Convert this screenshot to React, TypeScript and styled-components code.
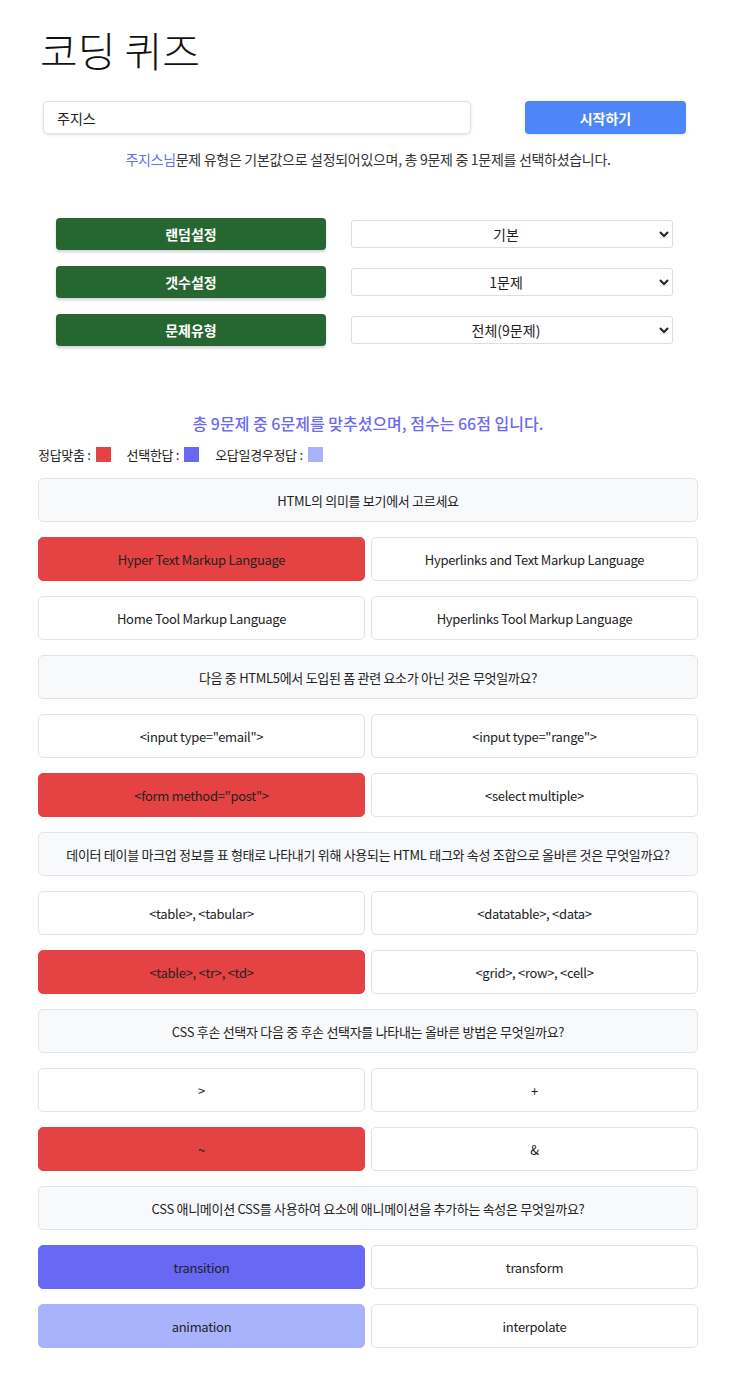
import React from 'react'
import styled, { createGlobalStyle } from 'styled-components'

const GlobalStyle = createGlobalStyle`
  body {
    margin: 0;
    background: #fff;
    font-family: "Noto Sans CJK KR", "Noto Sans", sans-serif;
    color: #222;
  }
`

type Mark = 'correct' | 'picked' | 'answer' | undefined

interface iQuiz {
    question: string
    options: string[]
    marks: Mark[]
}

const quizzes: iQuiz[] = [
    {
        question: 'HTML의 의미를 보기에서 고르세요',
        options: ['Hyper Text Markup Language', 'Hyperlinks and Text Markup Language', 'Home Tool Markup Language', 'Hyperlinks Tool Markup Language'],
        marks: ['correct', undefined, undefined, undefined],
    },
    {
        question: '다음 중 HTML5에서 도입된 폼 관련 요소가 아닌 것은 무엇일까요?',
        options: ['<input type="email">', '<input type="range">', '<form method="post">', '<select multiple>'],
        marks: [undefined, undefined, 'correct', undefined],
    },
    {
        question: '데이터 테이블 마크업 정보를 표 형태로 나타내기 위해 사용되는 HTML 태그와 속성 조합으로 올바른 것은 무엇일까요?',
        options: ['<table>, <tabular>', '<datatable>, <data>', '<table>, <tr>, <td>', '<grid>, <row>, <cell>'],
        marks: [undefined, undefined, 'correct', undefined],
    },
    {
        question: 'CSS 후손 선택자 다음 중 후손 선택자를 나타내는 올바른 방법은 무엇일까요?',
        options: ['>', '+', '~', '&'],
        marks: [undefined, undefined, 'correct', undefined],
    },
    {
        question: 'CSS 애니메이션 CSS를 사용하여 요소에 애니메이션을 추가하는 속성은 무엇일까요?',
        options: ['transition', 'transform', 'animation', 'interpolate'],
        marks: ['picked', undefined, 'answer', undefined],
    },
]

const markColor = (m: Mark) =>
    m === 'correct' ? '#e54343' : m === 'picked' ? '#6868f4' : m === 'answer' ? '#a9b3fc' : '#fff'

const settings = [
    { label: '랜덤설정', value: '기본' },
    { label: '갯수설정', value: '1문제' },
    { label: '문제유형', value: '전체(9문제)' },
]

const App: React.FC = () => {
    return (
        <Page>
            <GlobalStyle />
            <Title>코딩 퀴즈</Title>
            <StartRow>
                <NameInput defaultValue="주지스" />
                <StartButton>시작하기</StartButton>
            </StartRow>
            <Info>
                <Who>주지스님</Who>문제 유형은 기본값으로 설정되어있으며, 총 9문제 중 1문제를 선택하셨습니다.
            </Info>

            <Settings>
                {settings.map((s) => (
                    <SettingRow key={s.label}>
                        <SettingLabel>{s.label}</SettingLabel>
                        <Select defaultValue={s.value}>
                            <option>{s.value}</option>
                        </Select>
                    </SettingRow>
                ))}
            </Settings>

            <Score>총 9문제 중 6문제를 맞추셨으며, 점수는 66점 입니다.</Score>

            <Legend>
                <LegendItem>정답맞춤 : <Swatch bg="#e54343" /></LegendItem>
                <LegendItem>선택한답 : <Swatch bg="#6868f4" /></LegendItem>
                <LegendItem>오답일경우정답 : <Swatch bg="#a9b3fc" /></LegendItem>
            </Legend>

            <QuizList>
                {quizzes.map((q) => (
                    <QuizBlock key={q.question}>
                        <Question>{q.question}</Question>
                        <Options>
                            {q.options.map((o, i) => (
                                <Option key={o} bg={markColor(q.marks[i])} filled={!!q.marks[i]}>{o}</Option>
                            ))}
                        </Options>
                    </QuizBlock>
                ))}
            </QuizList>
        </Page>
    )
}

export default App

const Page = styled.div`
padding: 0 34px 40px 38px;
`

const Title = styled.h1`
margin: 0;
padding: 19px 0 0 2px;
font-size: 41px;
font-weight: 300;
line-height: 60px;
color: #111;
`

const StartRow = styled.div`
display: flex;
align-items: center;
margin-top: 22px;
padding-left: 5px;
`

const NameInput = styled.input`
width: 428px;
height: 33px;
box-sizing: border-box;
border: 1px solid #e3e3e3;
border-radius: 5px;
box-shadow: 0 1px 3px rgba(0, 0, 0, 0.12);
padding: 0 13px;
font-family: inherit;
font-size: 14px;
color: #222;
outline: none;
`

const StartButton = styled.button`
margin-left: 54px;
width: 161px;
height: 33px;
border: none;
border-radius: 4px;
background: #4d86f8;
color: #fff;
font-family: inherit;
font-size: 14px;
font-weight: 700;
box-shadow: 0 1px 3px rgba(0, 0, 0, 0.12);
`

const Info = styled.div`
margin-top: 15px;
text-align: center;
font-size: 14px;
line-height: 20px;
color: #333;
letter-spacing: -0.3px;
`

const Who = styled.span`
color: #6b6bf2;
`

const Settings = styled.div`
display: flex;
flex-direction: column;
gap: 16px;
margin-top: 49px;
padding-left: 18px;
`

const SettingRow = styled.div`
display: flex;
align-items: center;
`

const SettingLabel = styled.div`
width: 270px;
height: 32px;
display: flex;
align-items: center;
justify-content: center;
background: #256631;
color: #fff;
border-radius: 4px;
font-size: 14px;
font-weight: 700;
box-shadow: 0 2px 3px rgba(0, 0, 0, 0.18);
`

const Select = styled.select`
margin-left: 25px;
width: 322px;
height: 28px;
border: 1px solid #dedede;
border-radius: 3px;
background: #fff;
font-family: inherit;
font-size: 14px;
color: #222;
text-align: center;
text-align-last: center;
`

const Score = styled.div`
margin-top: 65px;
text-align: center;
font-size: 16px;
font-weight: 500;
line-height: 24px;
color: #6b6bf2;
`

const Legend = styled.div`
display: flex;
gap: 16px;
margin-top: 10px;
font-size: 13px;
color: #222;
letter-spacing: -0.3px;
`

const LegendItem = styled.div`
display: flex;
align-items: center;
gap: 5px;
`

const Swatch = styled.span<{ bg: string }>`
display: inline-block;
width: 15px;
height: 15px;
background: ${({ bg }) => bg};
`

const QuizList = styled.div`
display: flex;
flex-direction: column;
gap: 15px;
margin-top: 14px;
`

const QuizBlock = styled.div`
display: flex;
flex-direction: column;
gap: 15px;
`

const Question = styled.div`
height: 44px;
box-sizing: border-box;
display: flex;
align-items: center;
justify-content: center;
background: #f8f9fb;
border: 1px solid #e2e3e6;
border-radius: 5px;
font-size: 13px;
color: #222;
letter-spacing: -0.3px;
`

const Options = styled.div`
display: grid;
grid-template-columns: 1fr 1fr;
column-gap: 6px;
row-gap: 15px;
`

const Option = styled.div<{ bg: string, filled?: boolean }>`
height: 44px;
box-sizing: border-box;
display: flex;
align-items: center;
justify-content: center;
background: ${({ bg }) => bg};
border: 1px solid ${({ filled, bg }) => filled ? bg : '#e2e3e6'};
border-radius: 5px;
font-size: 13px;
color: #222;
letter-spacing: -0.3px;
`
